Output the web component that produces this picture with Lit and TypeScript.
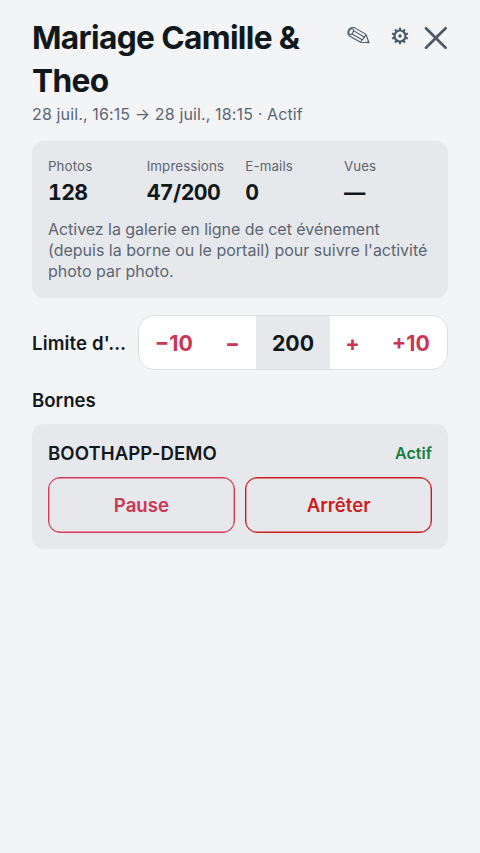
import { LitElement, html, css } from "lit";
import { customElement } from "lit/decorators.js";

const teeth = Array.from({ length: 10 }, (_, i) => {
  const a = (i * Math.PI) / 5;
  const x = Math.sin(a), y = -Math.cos(a);
  return `M${9 + x * 6} ${9 + y * 6}L${9 + x * 8.3} ${9 + y * 8.3}`;
}).join("");

@customElement("app-root")
class AppRoot extends LitElement {
  static styles = css`
    * { box-sizing: border-box; margin: 0; }
    :host { display: block; box-sizing: border-box; min-height: 100vh; padding: 16px 32px 0; background: #f3f4f6; color: #11181c; font-family: Inter, sans-serif; font-size: 16px; }
    button { font: inherit; background: none; border: 0; padding: 0; color: inherit; }
    header { display: flex; align-items: flex-start; height: 87px; }
    h1 { flex: 1; margin-top: 1px; font-size: 31.7px; line-height: 42.6px; font-weight: 700; letter-spacing: -0.66px; white-space: nowrap; }
    .tools { display: flex; align-items: center; color: #4d5966; height: 44px; }
    .tools svg { display: block; }
    .pencil { margin: 0 20px 5px 0; }
    .gear { margin: 0 15px 4px 0; }
    .date { height: 22px; line-height: 22px; font-size: 16px; letter-spacing: 0.13px; color: #5b6672; white-space: nowrap; }
    .card { background: #e7e8ec; border-radius: 12px; padding: 16px; }
    .stats { margin-top: 16px; height: 157px; }
    .grid { display: grid; grid-template-columns: repeat(4, 1fr); column-gap: 10.6px; }
    .label { font-size: 13.3px; line-height: 18px; letter-spacing: 0.13px; color: #5b6672; white-space: nowrap; }
    .value { font-size: 21.3px; line-height: 29px; font-weight: 700; margin-top: 3px; letter-spacing: -0.6px; font-variant-numeric: tabular-nums; white-space: nowrap; }
    .note { margin-top: 12px; font-size: 16px; line-height: 21.2px; color: #5b6672; white-space: nowrap; }
    .note::first-line { letter-spacing: -0.04px; }
    .limit { display: flex; align-items: center; justify-content: space-between; margin-top: 17px; height: 55px; }
    .name { font-size: 18.6px; font-weight: 600; letter-spacing: 0.13px; white-space: nowrap; }
    .stepper { display: flex; width: 310px; height: 55px; border: 1px solid #dbdde1; border-radius: 16px; overflow: hidden; background: #fff; color: #cb3654; font-weight: 700; font-size: 21.3px; }
    .wide { width: 71px; padding-right: 1.5px; }
    .small { width: 46px; padding-right: 1px; }
    .count { width: 74px; background: #e7e8ec; color: #11181c; display: grid; place-items: center; }
    h2 { font-size: 18.6px; line-height: 24px; font-weight: 600; margin-top: 18px; }
    .booth { margin-top: 12px; height: 125px; }
    .head { display: flex; justify-content: space-between; align-items: center; height: 26px; font-size: 18.6px; font-weight: 600; letter-spacing: 0.05px; }
    .state { color: #15803d; font-size: 16px; }
    .actions { display: flex; gap: 10.6px; margin-top: 11px; }
    .actions button { flex: 1; height: 56px; border: 1px solid #d43b58; box-shadow: inset 0 0 0 0.4px #d43b58; border-radius: 12px; color: #cb3654; font-weight: 600; font-size: 18.6px; }
    .actions .stop { color: #c81e1e; border-color: #c81e1e; box-shadow: inset 0 0 0 0.4px #c81e1e; }
  `;

  render() {
    return html`
      <header>
        <h1>Mariage Camille &amp;<br>Theo</h1>
        <div class="tools">
          <svg class="pencil" width="24" height="20" viewBox="0 0 24 20" fill="none" stroke="currentColor" stroke-width="1.1" stroke-linejoin="round"><path d="M4 1.8 7.5 1.6 19 8.4 22 16.8 13.5 16.3 2.2 9.8C-.2 7.6.8 3 4 1.8ZM6.5 4.6 17.5 11.2M5 8 15.2 13.8M19 8.4 17.5 11.2 15.2 13.8 13.5 16.3M20 16.6 21.6 15.3"/><ellipse cx="4.1" cy="5.6" rx="2.1" ry="3.1" transform="rotate(28 4.1 5.6)"/></svg>
          <svg class="gear" width="18" height="18" viewBox="0 0 18 18" fill="none" stroke="currentColor"><circle cx="9" cy="9" r="5.5" stroke-width="2.2"/><path d=${teeth} stroke-width="2.1"/><circle cx="9" cy="9" r="1.8" fill="currentColor" stroke="none"/></svg>
          <svg width="24" height="24" viewBox="0 0 24 24" fill="none" stroke="currentColor" stroke-width="2.7" stroke-linecap="round"><path d="M2 2.2 21.6 21.8M21.6 2.2 2 21.8"/></svg>
        </div>
      </header>
      <div class="date">28 juil., 16:15 → 28 juil., 18:15 · Actif</div>
      <section class="card stats">
        <div class="grid">
          ${[["Photos", "128"], ["Impressions", "47/200"], ["E-mails", "0"], ["Vues", "—"]].map(
            ([l, v]) => html`<div><div class="label">${l}</div><div class="value">${v}</div></div>`)}
        </div>
        <p class="note">Activez la galerie en ligne de cet événement<br>(depuis la borne ou le portail) pour suivre l'activité<br>photo par photo.</p>
      </section>
      <div class="limit">
        <span class="name">Limite d'…</span>
        <div class="stepper">
          <button class="wide">−10</button><button class="small">−</button><span class="count">200</span><button class="small">+</button><button class="wide">+10</button>
        </div>
      </div>
      <h2>Bornes</h2>
      <section class="card booth">
        <div class="head"><span>BOOTHAPP-DEMO</span><span class="state">Actif</span></div>
        <div class="actions"><button>Pause</button><button class="stop">Arrêter</button></div>
      </section>`;
  }
}
